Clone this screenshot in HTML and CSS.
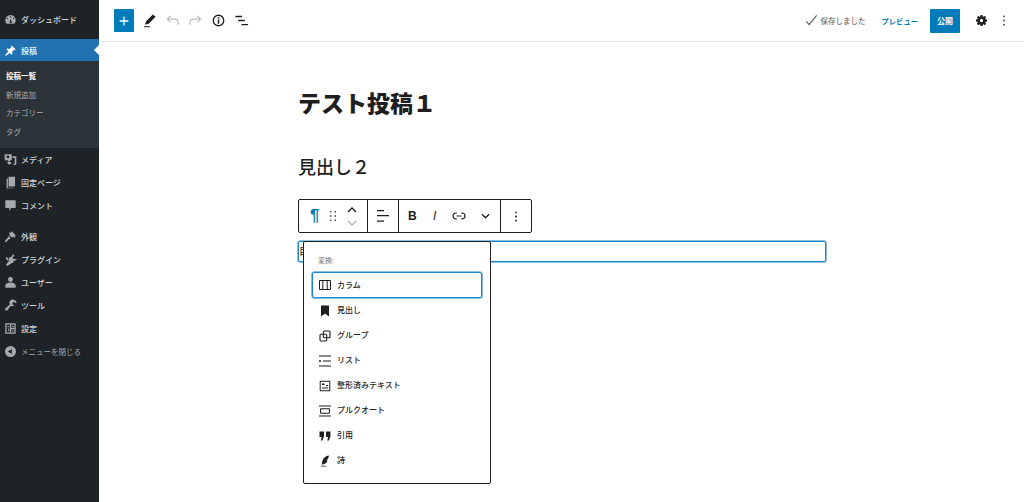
FILE: index.html
```html
<!DOCTYPE html>
<html lang="ja">
<head>
<meta charset="utf-8">
<title>テスト投稿1</title>
<link rel="stylesheet" href="styles.css">
</head>
<body>
<div class="app">
  <aside class="sidebar">
    <nav class="menu">
      <a class="item first"><svg class="mi" viewBox="0 0 20 20"><path d="M10 3a8 8 0 0 0-8 8c0 2.200.9 4.200 2.300 5.600h11.400A8 8 0 0 0 18 11a8 8 0 0 0-8-8zm-.8 2h1.600v2H9.200zM5 7l1.500 1.500-1 1L4 8zm10 0 1 1-1.500 1.500-1-1zM10 9l1.500 3.500A1.700 1.700 0 1 1 9 13z" fill-rule="evenodd"/></svg><span>ダッシュボード</span></a>
      <a class="item current"><svg class="mi" viewBox="0 0 20 20"><path d="M11.500 2 18 8.500l-1.500 1-1-.5-3 3 .5 3.500-1.200 1.200-3-3L3 18l-1 0 0-1 4.700-5.800-3-3L5 7l3.500.5 3-3-.5-1z"/></svg><span>投稿</span></a>
      <div class="submenu">
        <a class="sub on">投稿一覧</a>
        <a class="sub">新規追加</a>
        <a class="sub">カテゴリー</a>
        <a class="sub">タグ</a>
      </div>
      <a class="item"><svg class="mi" viewBox="0 0 20 20"><path fill-rule="evenodd" d="M1 2h11v9H9v2H6v-2H1zm5 2a2 2 0 1 0 0 4 2 2 0 0 0 0-4zM13 5h6v12l-2.500 2-2.500-1.500 1-1.200 1.500.7V7.500h-3.500zM5 14h6v2.500L8.500 18 6 16.500z"/></svg><span>メディア</span></a>
      <a class="item"><svg class="mi" viewBox="0 0 20 20"><path d="M7 1h10v15H7zM4 4h2v14h9v1H4z"/></svg><span>固定ページ</span></a>
      <a class="item"><svg class="mi" viewBox="0 0 20 20"><path d="M3 2h14a1 1 0 0 1 1 1v10a1 1 0 0 1-1 1h-6l-3 4v-4H3a1 1 0 0 1-1-1V3a1 1 0 0 1 1-1z"/></svg><span>コメント</span></a>
      <a class="item group"><svg class="mi" viewBox="0 0 20 20"><path d="M12 2l6 6-1.500 1.500L18 11l-1.500 1-2-1.500-2 1L8 8.500l1-2L7.500 5 9 3.500l1 1zM7.500 9.500l3 3L8 14l-5 5-2-1.500 4-5z"/></svg><span>外観</span></a>
      <a class="item"><svg class="mi" viewBox="0 0 20 20"><path d="M14 2l2 1.500-3 4 3 2L19 9v2l-4 1-1 3-3 1-6 4-2-2 4-5 1-6 3-1zM3 6l4 2-1 4-3-3z"/></svg><span>プラグイン</span></a>
      <a class="item"><svg class="mi" viewBox="0 0 20 20"><circle cx="10" cy="5.500" r="3.800"/><path d="M2 18v-3c0-3 3-5 8-5s8 2 8 5v3z"/></svg><span>ユーザー</span></a>
      <a class="item"><svg class="mi" viewBox="0 0 20 20"><path d="M14 1a5 5 0 0 1 5 6l-3-2.500-2.500 1-.5 2.500 2.500 2.500A5.500 5.500 0 0 1 10.500 10.500L5 17.500a2.200 2.200 0 0 1-3-3L9 8.500A5 5 0 0 1 14 1z"/></svg><span>ツール</span></a>
      <a class="item"><svg class="mi" viewBox="0 0 20 20"><path fill-rule="evenodd" d="M2 2h16v16H2zm2 2v12h5V4zm7 0v5h5V4zm0 7v5h5v-5zM5.500 6h2v2h-2zm1 4h1.500v4H6.500zm6-4.500h2v2h-2zm0 7h2v2h-2z"/></svg><span>設定</span></a>
      <a class="item fold"><svg class="mi" viewBox="0 0 20 20"><path fill-rule="evenodd" d="M10 1.500a8.500 8.500 0 1 1 0 17 8.500 8.500 0 0 1 0-17zm2 4.500-6 4 6 4z"/></svg><span>メニューを閉じる</span></a>
    </nav>
  </aside>
  <main class="main">
    <header class="topbar">
      <div class="tools">
        <button class="inserter"><svg viewBox="0 0 20 20" class="plus"><path d="M9.200 4.500h1.600v4.700h4.700v1.600h-4.700v4.700H9.200v-4.700H4.500V9.200h4.700z"/></svg></button>
        <svg class="ti pencil" viewBox="0 0 16 16"><path d="M11.600 1.500l2.900 2.600-7.400 7.300-3.700 1 .9-3.500zM2 14h6.500v1.300H2z"/></svg>
        <svg class="ti muted" viewBox="0 0 16 16"><path d="M6 3 2.500 6.500 6 10M3 6.500h7.500a3.500 3.500 0 0 1 3.500 3.500v2.500" fill="none" stroke="currentColor" stroke-width="1.300"/></svg>
        <svg class="ti muted" viewBox="0 0 16 16"><path d="M10 3l3.500 3.500L10 10M13 6.500H5.500A3.500 3.500 0 0 0 2 10v2.500" fill="none" stroke="currentColor" stroke-width="1.300"/></svg>
        <svg class="ti" viewBox="0 0 16 16"><circle cx="8" cy="8" r="5.600" fill="none" stroke="currentColor" stroke-width="1.400"/><path d="M7.200 4.500h1.600v1.500H7.200zM7.200 7h1.600v4.500H7.200z"/></svg>
        <svg class="ti" viewBox="0 0 16 16"><path d="M1.500 3h7v1.400h-7zM4.500 7.300h7v1.400h-7zM8 11.600h7V13H8z"/></svg>
      </div>
      <div class="actions">
        <span class="saved"><svg class="check" viewBox="0 0 14 14"><path d="M1.500 8l3 3.500L12.500 1.500" fill="none" stroke="currentColor" stroke-width="1.100"/></svg>保存しました</span>
        <a class="preview">プレビュー</a>
        <button class="publish">公開</button>
        <svg class="gear" viewBox="0 0 20 20"><path fill-rule="evenodd" d="M8.300 0h3.400l.5 2.700 1.500.6 2.300-1.600 2.400 2.400-1.600 2.300.6 1.500 2.700.5v3.400l-2.700.5-.6 1.500 1.600 2.300-2.400 2.400-2.300-1.600-1.500.6-.5 2.700H8.300l-.5-2.700-1.500-.6-2.300 1.600-2.400-2.400 1.600-2.300-.6-1.500L-.1 11.700V8.300l2.700-.5.6-1.500-1.600-2.300 2.400-2.400 2.300 1.600 1.500-.6zM10 7a3 3 0 1 0 0 6 3 3 0 0 0 0-6z"/></svg>
        <svg class="kebab" viewBox="0 0 4 14"><circle cx="2" cy="2.500" r="1"/><circle cx="2" cy="7" r="1"/><circle cx="2" cy="11.500" r="1"/></svg>
      </div>
    </header>
    <article class="editor">
      <h1 class="post-title">テスト投稿１</h1>
      <h2 class="heading">見出し２</h2>
      <div class="block-toolbar">
        <div class="tb-group tb-first">
          <span class="para">¶</span>
          <svg class="drag" viewBox="0 0 8 12"><path d="M1 1h1.500v1.500H1zM5.500 1H7v1.500H5.500zM1 5.200h1.500v1.500H1zM5.500 5.200H7v1.500H5.500zM1 9.500h1.500V11H1zM5.500 9.500H7V11H5.500z"/></svg>
          <div class="movers">
            <svg viewBox="0 0 10 6"><path d="M1 5l4-4 4 4" fill="none" stroke="#1e1e1e" stroke-width="1.300"/></svg>
            <svg viewBox="0 0 10 6"><path d="M1 1l4 4 4-4" fill="none" stroke="#aaa" stroke-width="1.100"/></svg>
          </div>
        </div>
        <div class="tb-group tb-align">
          <svg class="tb-ic" viewBox="0 0 12 12"><path d="M0 0h7v1.200H0zM0 5h12v1.200H0zM0 10.500h7v1.200H0z"/></svg>
        </div>
        <div class="tb-group tb-format">
          <b class="bold">B</b>
          <i class="italic">I</i>
          <svg class="link" viewBox="0 0 14 8"><path d="M5 1H4a3 3 0 0 0 0 6h1M9 1h1a3 3 0 0 1 0 6H9M4.500 4h5" fill="none" stroke="#1e1e1e" stroke-width="1.200"/></svg>
          <svg class="more" viewBox="0 0 10 6"><path d="M1 1l4 4 4-4" fill="none" stroke="#1e1e1e" stroke-width="1.500"/></svg>
        </div>
        <div class="tb-group tb-last">
          <svg class="kebab-sm" viewBox="0 0 4 14"><circle cx="2" cy="2.500" r="1"/><circle cx="2" cy="7" r="1"/><circle cx="2" cy="11.500" r="1"/></svg>
        </div>
      </div>
      <div class="paragraph">
        <span class="para-text">目</span>
        <div class="popover">
          <div class="pop-label">変換:</div>
          <ul class="pop-list">
            <li class="pop-item focus"><svg class="pi" viewBox="0 0 12 12"><path fill-rule="evenodd" d="M1 1h10a1 1 0 0 1 1 1v8a1 1 0 0 1-1 1H1a1 1 0 0 1-1-1V2a1 1 0 0 1 1-1zm0 1v8h2.300V2zm3.300 0v8h3.400V2zm4.400 0v8H11V2z"/></svg>カラム</li>
            <li class="pop-item"><svg class="pi" viewBox="0 0 12 12"><path d="M2 .5h8v11l-4-3-4 3z"/></svg>見出し</li>
            <li class="pop-item"><svg class="pi" viewBox="0 0 12 12"><rect x="4.300" y="1" width="6.700" height="6.700" rx="1" fill="none" stroke="#1e1e1e" stroke-width="1.100"/><rect x="1" y="4.300" width="6.700" height="6.700" rx="1" fill="none" stroke="#1e1e1e" stroke-width="1.100"/></svg>グループ</li>
            <li class="pop-item"><svg class="pi" viewBox="0 0 12 12"><path d="M0 .5h12v1.100H0zM0 5.200h2v1.600H0zM4 5.500h8v1.100H4zM0 10.400h12v1.100H0z"/></svg>リスト</li>
            <li class="pop-item"><svg class="pi" viewBox="0 0 12 12"><path fill-rule="evenodd" d="M1.500.7h9a.8.8 0 0 1 .8.8v9a.8.8 0 0 1-.8.8h-9a.8.8 0 0 1-.8-.8v-9a.8.8 0 0 1 .8-.8zm.2 1v8.600h8.600V1.700zM3 3.500h2.500V5H3zM7 5h2v1H7zM3 7.500h6v1H3z"/></svg>整形済みテキスト</li>
            <li class="pop-item"><svg class="pi" viewBox="0 0 12 12"><path fill-rule="evenodd" d="M0 .5h12v1.100H0zM2 3.200h8a1 1 0 0 1 1 1v3.600a1 1 0 0 1-1 1H2a1 1 0 0 1-1-1V4.200a1 1 0 0 1 1-1zm.1 1v3.600h7.800V4.200zM0 10.400h12v1.100H0z"/></svg>プルクオート</li>
            <li class="pop-item"><svg class="pi" viewBox="0 0 12 12"><path d="M.5 1.500H5v5L3.300 10.500H1.700l1-3.500H.5zM7 1.500h4.500v5l-1.700 4H8.200l1-3.500H7z"/></svg>引用</li>
            <li class="pop-item"><svg class="pi" viewBox="0 0 12 12"><path d="M10 .5C6 1 3.500 3.500 3 8.500L2.500 9.500h1.300C7 9 8.500 6.500 8.500 5L6.500 5.500 9 4zM2 10.700h5v.8H2z"/></svg>詩</li>
          </ul>
        </div>
      </div>
    </article>
  </main>
</div>
</body>
</html>
```
FILE: styles.css
```css
* { box-sizing: border-box; }
html, body { margin: 0; padding: 0; height: 100%; overflow: hidden; }
body {
  background: #fff;
  color: #1e1e1e;
  font-family: "Liberation Sans", "Noto Sans CJK JP", sans-serif;
  font-size: 9px;
}
.app { display: flex; height: 502px; }

/* sidebar */
.sidebar { width: 99px; flex: none; background: #1d2327; color: #d4d6d8; }
.menu { display: flex; flex-direction: column; padding-top: 8px; }
.item { height: 23px; display: flex; align-items: center; gap: 4px; padding-left: 4px; font-size: 8px; font-weight: 500; position: relative; }
.mi { width: 13px; height: 13px; fill: #a7aaad; flex: none; }
.item.first { margin-bottom: 8px; }
.item.current { background: #2271b1; color: #fff; height: 22px; }
.item.current .mi { fill: #fff; }
.item.current::after {
  content: ""; position: absolute; right: 0; top: 6px;
  border: 5px solid transparent; border-right-color: #fff; border-left-width: 0;
}
.submenu { background: #2c3338; height: 87px; padding-top: 5.500px; display: flex; flex-direction: column; }
.sub { height: 18.600px; display: flex; align-items: center; padding-left: 6px; font-size: 7.500px; color: #a9adb1; }
.sub.on { color: #fff; font-weight: 700; }
.group { margin-top: 8px; }
.fold { color: #a7aaad; font-weight: 400; font-size: 7.500px; }

/* main */
.main { flex: 1; min-width: 0; }
.topbar { height: 42px; border-bottom: 1px solid #e4e4e4; display: flex; justify-content: space-between; align-items: center; padding: 0 18px 0 15px; }
.tools { display: flex; align-items: center; gap: 8px; }
.inserter { width: 20px; height: 23px; padding: 0; border: 0; border-radius: 1px; background: #007cba; display: flex; align-items: center; justify-content: center; }
.plus { width: 16px; height: 16px; fill: #fff; }
.ti { width: 15px; height: 15px; fill: #1e1e1e; color: #1e1e1e; flex: none; }
.ti.muted { color: #bdbdbd; fill: none; }
.actions { display: flex; align-items: center; }
.saved { display: flex; align-items: center; gap: 3px; color: #757575; font-size: 7.500px; font-weight: 500; }
.check { width: 13px; height: 13px; color: #555; }
.preview { color: #007cba; font-size: 7.300px; font-weight: 700; margin-left: 16px; }
.publish { width: 30px; height: 24px; margin-left: 12px; padding: 0; border: 0; border-radius: 1px; background: #007cba; color: #fff; font: 700 8px "Liberation Sans", "Noto Sans CJK JP", sans-serif; }
.gear { width: 11px; height: 11px; margin-left: 16px; fill: #1e1e1e; overflow: visible; }
.kebab { width: 4px; height: 13px; margin-left: 15px; fill: #444; }

/* editor */
.editor { width: 528px; margin-left: 199px; padding-top: 43px; }
.post-title { margin: 0; font-size: 23px; line-height: 38px; font-weight: 900; color: #1e1e1e; }
.heading { margin: 30px 0 0; font-size: 18px; line-height: 30px; font-weight: 500; color: #1e1e1e; }
.block-toolbar { display: flex; width: 234px; height: 34px; margin-top: 16px; border: 1px solid #1e1e1e; border-radius: 2px; background: #fff; }
.tb-group { display: flex; align-items: center; height: 100%; border-right: 1px solid #1e1e1e; }
.tb-first { width: 69px; padding-left: 11px; }
.tb-align { width: 31px; justify-content: center; }
.tb-format { width: 102px; padding-left: 9px; }
.tb-last { flex: 1; border-right: 0; justify-content: center; }
.para { color: #007cba; font-size: 17px; font-weight: 700; width: 19px; }
.drag { width: 8px; height: 12px; fill: #444; }
.movers { display: flex; flex-direction: column; gap: 7px; margin-left: 10px; }
.movers svg { width: 10px; height: 6px; display: block; }
.tb-ic { width: 12px; height: 12px; fill: #1e1e1e; }
.bold { font: 700 12px "Liberation Sans", sans-serif; width: 24px; }
.italic { font: italic 400 12px "Liberation Sans", sans-serif; width: 15px; padding-left: 1px; }
.link { width: 14px; height: 8px; margin-left: 5px; }
.more { width: 9px; height: 6px; margin-left: 15px; }
.kebab-sm { width: 4px; height: 13px; fill: #1e1e1e; }
.paragraph { position: relative; height: 21px; margin-top: 8px; border: 1px solid #1a86c4; box-shadow: 0 0 0 .5px #1a86c4; border-radius: 2px; font-size: 10px; line-height: 19px; }
.para-text { display: block; overflow: hidden; width: 5px; }
.popover { position: absolute; left: 4px; top: -1px; width: 188px; height: 243px; background: #fff; border: 1px solid #1e1e1e; border-radius: 2px; padding: 14px 8px 0 7px; z-index: 2; }
.pop-label { font-size: 7px; color: #757575; line-height: 10px; padding-left: 7px; margin-bottom: 6px; }
.pop-list { list-style: none; margin: 0 0 0 1px; padding: 0; }
.pop-item { height: 25px; display: flex; align-items: center; gap: 6px; padding-left: 7px; font-size: 8px; font-weight: 500; color: #1e1e1e; }
.pop-item.focus { height: 26px; border: 1px solid #1a86c4; box-shadow: 0 0 0 .5px #1a86c4; border-radius: 2px; padding-left: 6px; }
.pi { width: 12px; height: 12px; fill: #1e1e1e; flex: none; }
```
